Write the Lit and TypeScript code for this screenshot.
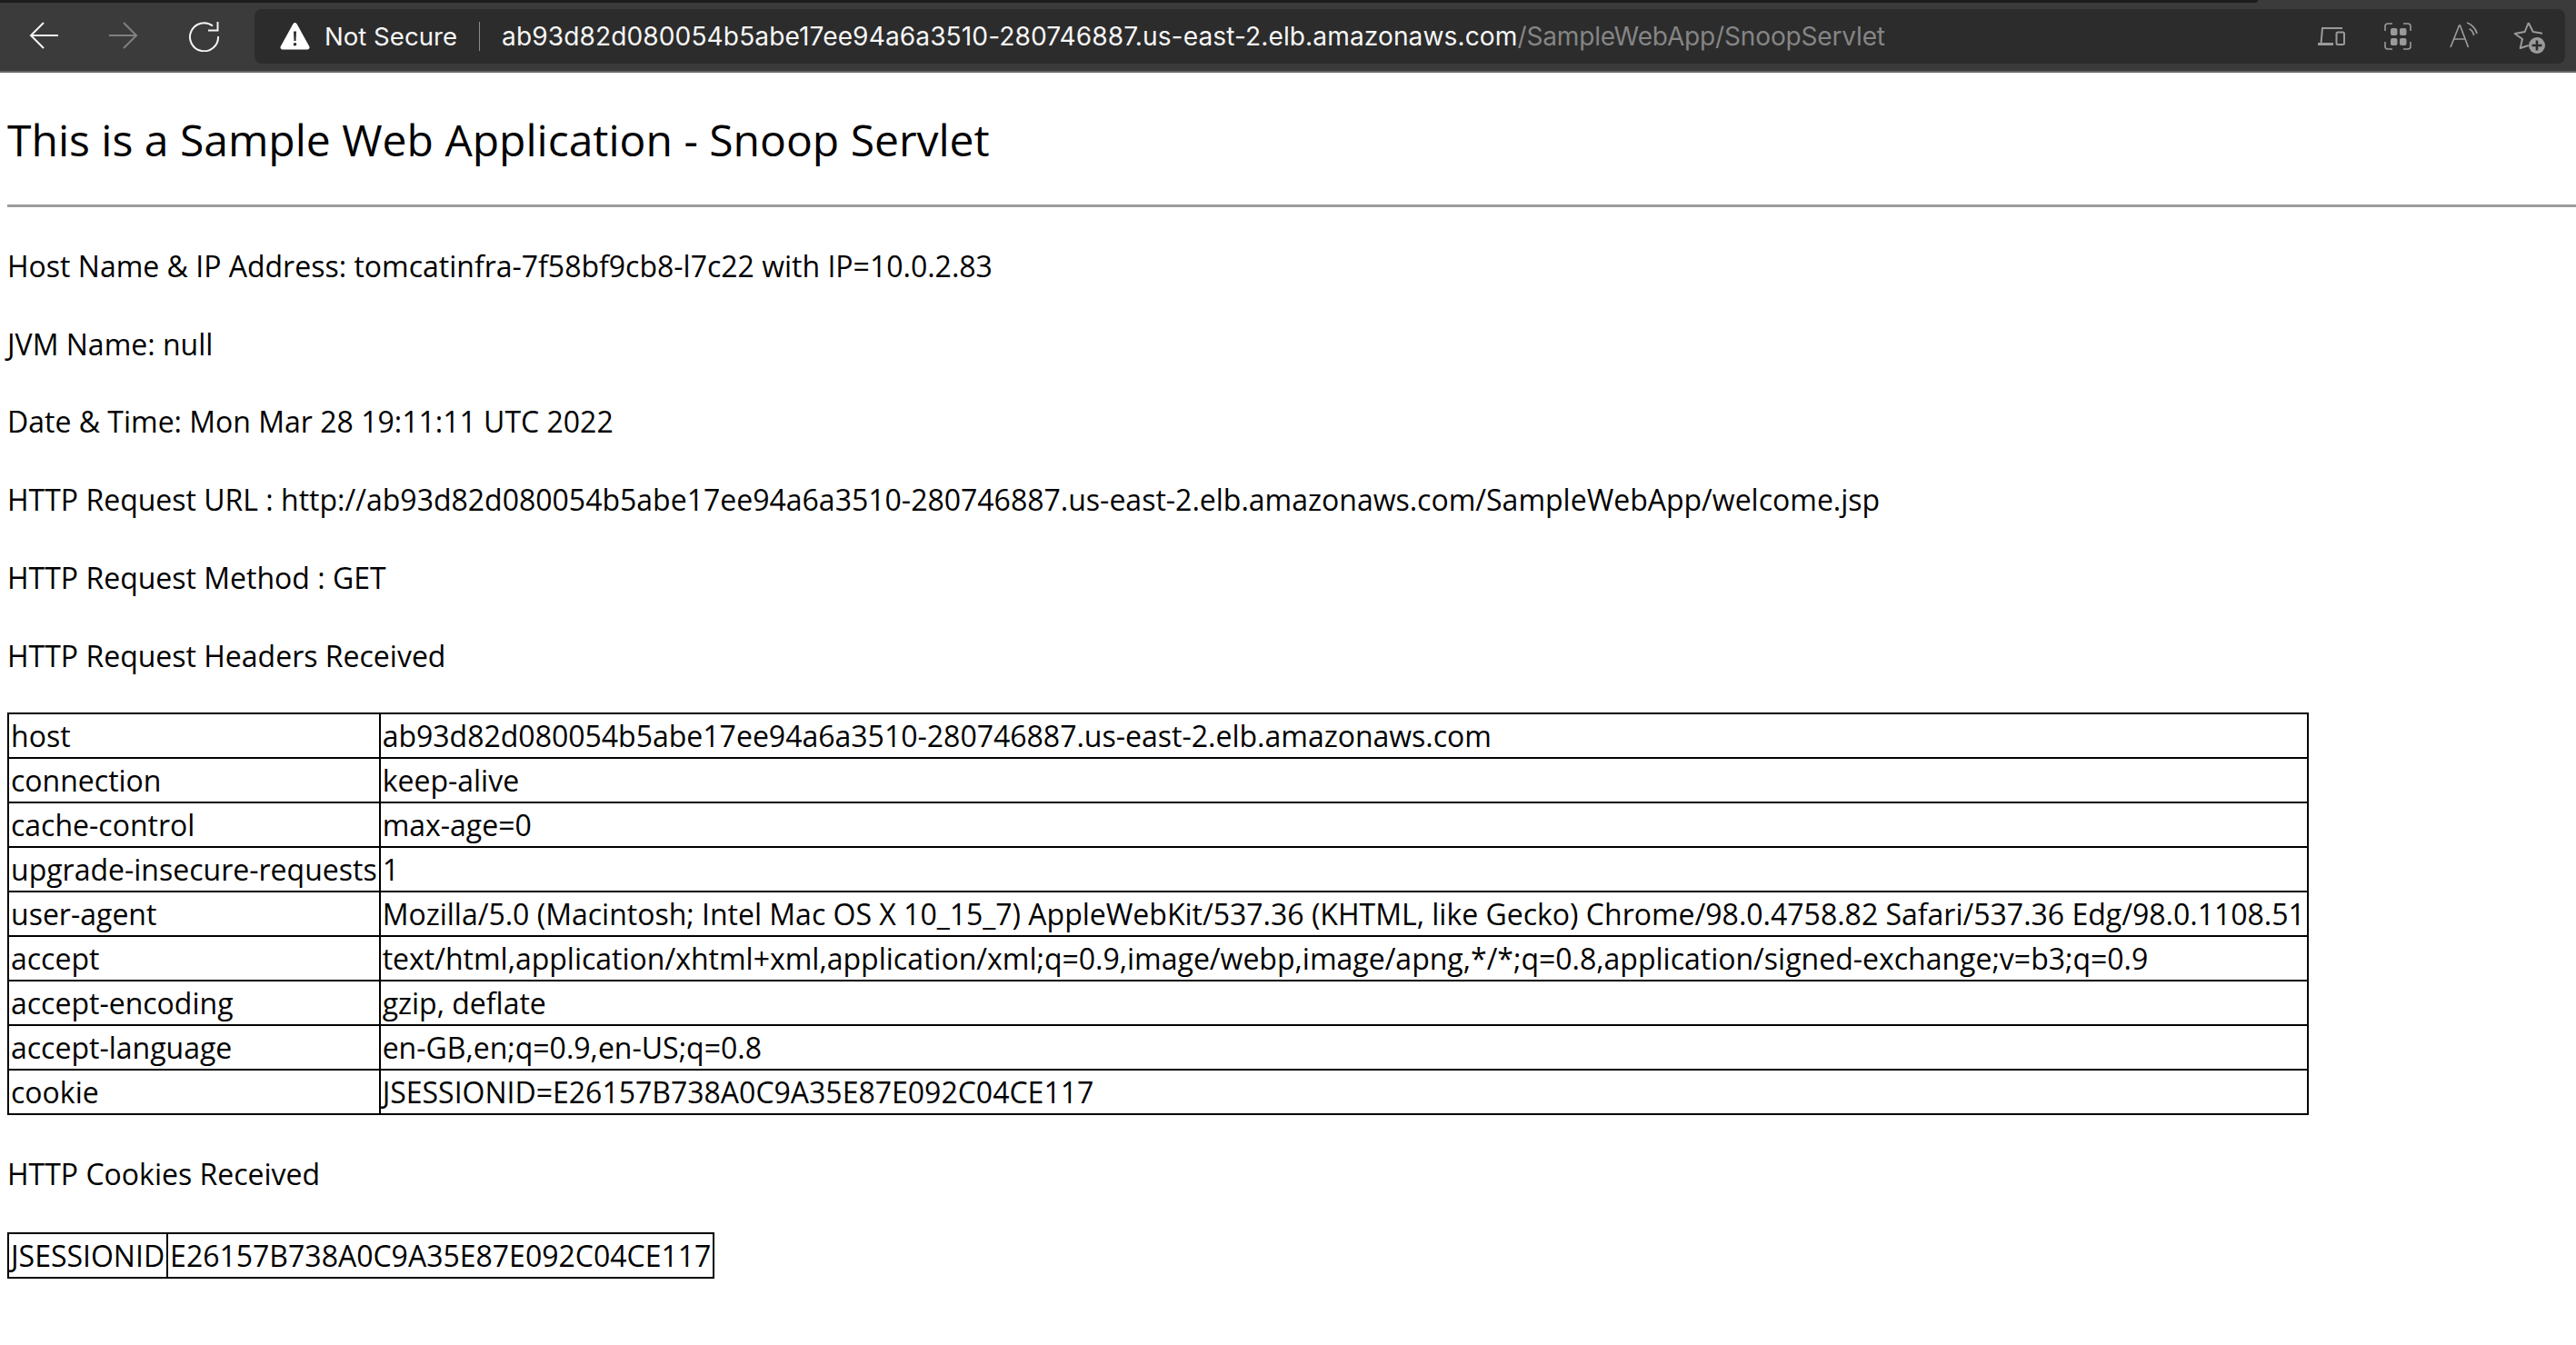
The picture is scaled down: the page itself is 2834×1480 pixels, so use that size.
import { LitElement, html, css } from "lit";
import { customElement } from "lit/decorators.js";

const HEADERS: [string, string][] = [
  ["host", "ab93d82d080054b5abe17ee94a6a3510-280746887.us-east-2.elb.amazonaws.com"],
  ["connection", "keep-alive"],
  ["cache-control", "max-age=0"],
  ["upgrade-insecure-requests", "1"],
  ["user-agent", "Mozilla/5.0 (Macintosh; Intel Mac OS X 10_15_7) AppleWebKit/537.36 (KHTML, like Gecko) Chrome/98.0.4758.82 Safari/537.36 Edg/98.0.1108.51"],
  ["accept", "text/html,application/xhtml+xml,application/xml;q=0.9,image/webp,image/apng,*/*;q=0.8,application/signed-exchange;v=b3;q=0.9"],
  ["accept-encoding", "gzip, deflate"],
  ["accept-language", "en-GB,en;q=0.9,en-US;q=0.8"],
  ["cookie", "JSESSIONID=E26157B738A0C9A35E87E092C04CE117"],
];

@customElement("app-root")
export class AppRoot extends LitElement {
  static styles = css`
    :host { display: block; width: 2834px; height: 1480px; background: #fff; overflow: hidden; color: #000; font-family: "Open Sans", sans-serif; }
    .chrome { height: 78px; background: #3b3b3b; border-bottom: 2px solid #666; display: flex; align-items: flex-start; position: relative; }
    .strip { position: absolute; left: 0; top: 0; width: 2484px; height: 3px; background: #1c1c1c; border-radius: 0 0 6px 0; }
    .navs { display: flex; width: 280px; height: 78px; flex: none; padding-left: 32px; box-sizing: border-box; }
    .nav { height: 34px; margin-top: 23px; flex: none; }
    .nav svg { display: block; }
    .fwd { margin-left: 56px; }
    .rel { margin-left: 56px; }
    .addr { margin-top: 10px; height: 60px; width: 2542px; background: #2c2c2c; border-radius: 8px; display: flex; align-items: center; font-family: "Inter", sans-serif; font-size: 28.100px; color: #f6f6f6; position: relative; }
    .warn { margin-left: 28px; margin-bottom: 2px; flex: none; display: block; }
    .ns { margin-left: 16px; font-size: 27.600px; }
    .sep { width: 1px; height: 32px; background: #8a8a8a; margin: 0 24px 0 24px; flex: none; }
    .host { letter-spacing: 0.1px; }
    .path { color: #858585; letter-spacing: -0.2px; }
    .tools { margin-left: auto; display: flex; margin-right: 22px; align-items: center; }
    .tools svg { display: block; overflow: visible; }
    .i2 { margin-left: 43px; }
    .i3 { margin-left: 42px; }
    .i4 { margin-left: 39px; }
    .main { padding: 0 8px; }
    h1 { margin: 0; font-size: 48px; font-weight: 400; line-height: 65px; padding-top: 41px; white-space: nowrap; }
    .rule { height: 3px; background: #9c9c9c; margin: 39px -8px 0 0; }
    p { margin: 0; font-size: 32px; line-height: 44px; padding-top: 42px; white-space: nowrap; }
    p.after { padding-top: 43px; }
    p.tight { padding-top: 41px; }
    table { border-collapse: collapse; font-size: 32px; line-height: 45px; white-space: nowrap; }
    td { border: 2px solid #000; padding: 1px 2px; }
    .t1 { margin-top: 40px; }
    .t2 { margin-top: 42px; }
  `;

  render() {
    return html`
      <div class="chrome">
        <div class="strip"></div>
        <div class="navs">
          <div class="nav"><svg width="32" height="32" viewBox="0 0 32 32" fill="none" stroke="#f4f4f4" stroke-width="2"><path d="M32 16H2M16 2 2 16l14 14"/></svg></div>
          <div class="nav fwd"><svg width="32" height="32" viewBox="0 0 32 32" fill="none" stroke="#808080" stroke-width="2"><path d="M0 16h30M16 2l14 14-14 14"/></svg></div>
          <div class="nav rel"><svg width="34" height="34" viewBox="0 0 34 34" fill="none" stroke="#f4f4f4" stroke-width="2"><path d="M26 5.500A15.500 15.500 0 1 0 32 17"/><path d="M31.500 1v9.500H21"/></svg></div>
        </div>
        <div class="addr">
          <svg class="warn" width="33" height="31" viewBox="0 0 33 31"><path fill="#fff" fill-rule="evenodd" d="M16.500 1c1 0 1.700.6 2.200 1.500l13.500 24.600c.9 1.700-.2 3.400-2 3.400H2.800c-1.800 0-2.900-1.700-2-3.400L14.300 2.500C14.800 1.600 15.500 1 16.500 1zM15 10.500l.5 10.500h2l.5-10.500h-3zM16.500 23a1.800 1.800 0 1 0 0 3.600 1.800 1.800 0 0 0 0-3.600z"/></svg>
          <span class="ns">Not Secure</span>
          <span class="sep"></span>
          <span class="host">ab93d82d080054b5abe17ee94a6a3510-280746887.us-east-2.elb.amazonaws.com<span class="path">/SampleWebApp/SnoopServlet</span></span>
          <div class="tools">
            <svg width="30" height="22" viewBox="0 0 30 22" fill="none" stroke="#9a9a9a" stroke-width="2"><path d="M27 2H5L3.500 19"/><path d="M0 19.500h17" stroke-width="3"/><rect x="20.500" y="6.500" width="8.500" height="13.500" rx="1.500"/></svg>
            <svg class="i2" width="30" height="30" viewBox="0 0 30 30" fill="none" stroke="#9a9a9a" stroke-width="1.600"><path d="M1 9V4a3 3 0 0 1 3-3h5M21 1h5a3 3 0 0 1 3 3v5M29 21v5a3 3 0 0 1-3 3h-5M9 29H4a3 3 0 0 1-3-3v-5"/><g fill="#9a9a9a" stroke="none"><rect x="7" y="6" width="7.500" height="8" rx="2"/><rect x="17" y="6" width="7.500" height="8" rx="2"/><rect x="7" y="17" width="7.500" height="8" rx="2"/><rect x="17" y="17" width="7.500" height="8" rx="2"/></g></svg>
            <svg class="i3" width="31" height="32" viewBox="0 0 31 32" fill="none" stroke="#9a9a9a" stroke-width="1.700"><path d="M1 28 10.500 4h1L20.500 28M4.500 19h13"/><path d="M19 1c4.500 1.500 10 6 11 12M21.700 7.700c2.500 1.200 4.300 4 5 7.300"/></svg>
            <svg class="i4" width="35" height="36" viewBox="0 0 35 36" fill="none"><path stroke="#9a9a9a" stroke-width="2" stroke-linejoin="round" d="M16.700 3 12.700 13 1.700 15 10 21 7.700 31 16.700 28M16.700 3l5 10L32 14.700"/><circle cx="26" cy="28" r="9" fill="#9a9a9a"/><path stroke="#2c2c2c" stroke-width="2.600" d="M26 22.500v11M20.500 28h11"/></svg>
          </div>
        </div>
      </div>
      <div class="main">
        <h1>This is a Sample Web Application - Snoop Servlet</h1>
        <div class="rule"></div>
        <p class="after">Host Name &amp; IP Address: tomcatinfra-7f58bf9cb8-l7c22 with IP=10.0.2.83</p>
        <p>JVM Name: null</p>
        <p class="tight">Date &amp; Time: Mon Mar 28 19:11:11 UTC 2022</p>
        <p>HTTP Request URL : http://ab93d82d080054b5abe17ee94a6a3510-280746887.us-east-2.elb.amazonaws.com/SampleWebApp/welcome.jsp</p>
        <p>HTTP Request Method : GET</p>
        <p>HTTP Request Headers Received</p>
        <table class="t1">
          ${HEADERS.map(([k, v]) => html`<tr><td>${k}</td><td>${v}</td></tr>`)}
        </table>
        <p class="after">HTTP Cookies Received</p>
        <table class="t2"><tr><td>JSESSIONID</td><td>E26157B738A0C9A35E87E092C04CE117</td></tr></table>
      </div>
    `;
  }
}
